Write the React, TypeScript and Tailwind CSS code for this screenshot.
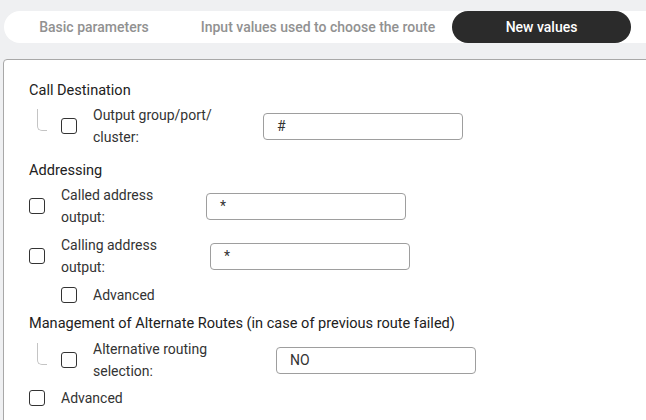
import React from "react";

function Box() {
  return <div className="w-[16px] h-[16px] shrink-0 rounded-[3px] border-[1.5px] border-[#333333] bg-white" />;
}

function Connector() {
  return <div className="self-start mt-[5px] ml-[8px] w-[10px] h-[22px] shrink-0 border-l border-b border-[#c4c4c4] rounded-bl-[5px]" />;
}

function Input({ value }: { value: string }) {
  return (
    <div className="w-[200px] h-[27px] shrink-0 rounded-[4px] border border-[#9e9e9e] bg-white flex items-center pl-[13px] text-[14px] text-[#333333]">
      {value}
    </div>
  );
}

function Heading({ children, className }: { children: React.ReactNode; className?: string }) {
  return <div className={"h-[22px] leading-[22px] text-[14.55px] text-[#212121] " + (className ?? "")}>{children}</div>;
}

export default function App() {
  return (
    <div className="w-full h-[420px] overflow-hidden bg-[#eff0f2]" style={{ fontFamily: "Roboto, 'Liberation Sans', sans-serif" }}>
      <div className="pt-[11px] pl-[4px]">
        <div className="h-[32px] bg-white rounded-l-full flex items-center text-[14px] font-medium">
          <div className="w-[180px] text-center text-[#919191]">Basic parameters</div>
          <div className="w-[268px] text-center text-[#919191]">Input values used to choose the route</div>
          <div className="w-[179px] h-[32px] rounded-full bg-[#2b2b2b] text-white flex items-center justify-center">New values</div>
        </div>
      </div>
      <div className="mt-[16px] ml-[3px] mr-[-10px] h-[400px] bg-white border border-[#a8a8a8] rounded-tl-[4px] pl-[25px] pt-[20px] text-[14px] leading-[22px] text-[#333333]">
        <Heading>Call Destination</Heading>
        <div className="mt-[2px] flex items-center">
          <Connector />
          <div className="ml-[14px]"><Box /></div>
          <div className="ml-[16px] w-[170px]">Output group/port/<br />cluster:</div>
          <Input value="#" />
        </div>
        <Heading className="mt-[12px]">Addressing</Heading>
        <div className="mt-[2px] flex items-center">
          <Box />
          <div className="ml-[16px] w-[145px]">Called address<br />output:</div>
          <Input value="*" />
        </div>
        <div className="mt-[6px] flex items-center">
          <Box />
          <div className="ml-[16px] w-[149px]">Calling address<br />output:</div>
          <Input value="*" />
        </div>
        <div className="mt-[6px] flex items-center pl-[32px]">
          <Box />
          <div className="ml-[16px]">Advanced</div>
        </div>
        <Heading className="mt-[7px]">Management of Alternate Routes (in case of previous route failed)</Heading>
        <div className="mt-[3px] flex items-center">
          <Connector />
          <div className="ml-[14px]"><Box /></div>
          <div className="ml-[16px] w-[183px]">Alternative routing<br />selection:</div>
          <Input value="NO" />
        </div>
        <div className="mt-[5px] flex items-center">
          <Box />
          <div className="ml-[16px]">Advanced</div>
        </div>
      </div>
    </div>
  );
}
